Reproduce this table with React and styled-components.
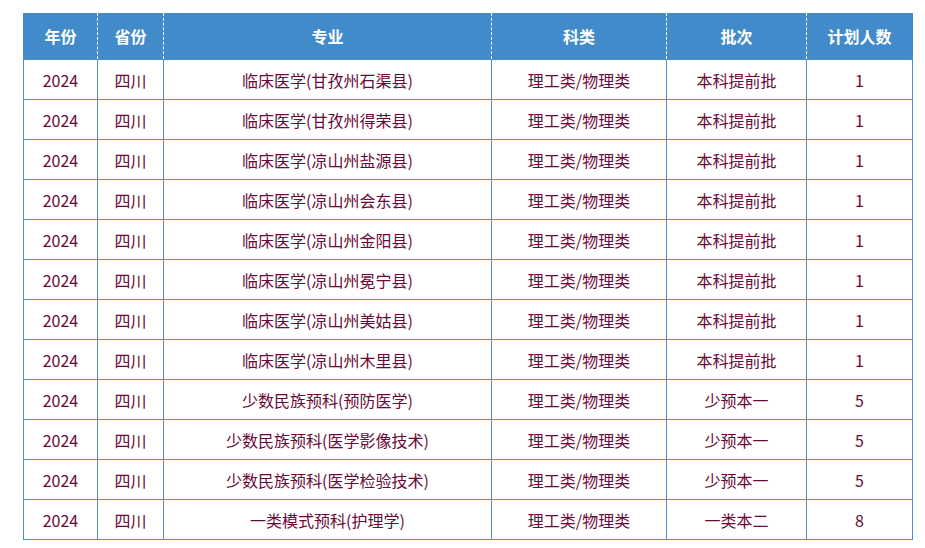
import React from 'react'
import styled, { createGlobalStyle } from 'styled-components'

const rows = [
  ['临床医学(甘孜州石渠县)', '本科提前批', 1],
  ['临床医学(甘孜州得荣县)', '本科提前批', 1],
  ['临床医学(凉山州盐源县)', '本科提前批', 1],
  ['临床医学(凉山州会东县)', '本科提前批', 1],
  ['临床医学(凉山州金阳县)', '本科提前批', 1],
  ['临床医学(凉山州冕宁县)', '本科提前批', 1],
  ['临床医学(凉山州美姑县)', '本科提前批', 1],
  ['临床医学(凉山州木里县)', '本科提前批', 1],
  ['少数民族预科(预防医学)', '少预本一', 5],
  ['少数民族预科(医学影像技术)', '少预本一', 5],
  ['少数民族预科(医学检验技术)', '少预本一', 5],
  ['一类模式预科(护理学)', '一类本二', 8],
]

const columns = [
  { title: '年份', width: 74 },
  { title: '省份', width: 66 },
  { title: '专业', width: 328 },
  { title: '科类', width: 175 },
  { title: '批次', width: 140 },
  { title: '计划人数', width: 106 },
]

const Global = createGlobalStyle`
  body {
    margin: 0;
    background: #fff;
    font-family: "Noto Sans CJK SC", "Noto Sans", sans-serif;
  }
`

const Wrap = styled.div`
  padding: 13px 0 0 23px;
`

const Table = styled.table`
  border-collapse: collapse;
  table-layout: fixed;
  width: 890px;
`

const Th = styled.th`
  height: 46px;
  padding: 0;
  background: #428bca;
  color: #fff;
  font-size: 16px;
  font-weight: bold;
  text-align: center;
  border-left: 1px dashed #fff;
  &:first-child {
    border-left: 1px solid #428bca;
  }
  &:last-child {
    border-right: 1px solid #428bca;
  }
`

const Td = styled.td`
  height: 39px;
  padding: 0;
  border: 1px solid #4a8fcd;
  color: #6a0937;
  font-size: 16px;
  text-align: center;
`

export default function App() {
  return (
    <Wrap>
      <Global />
      <Table>
        <colgroup>
          {columns.map((c) => (
            <col key={c.title} style={{ width: c.width }} />
          ))}
        </colgroup>
        <thead>
          <tr>
            {columns.map((c) => (
              <Th key={c.title}>{c.title}</Th>
            ))}
          </tr>
        </thead>
        <tbody>
          {rows.map(([major, batch, count]) => (
            <tr key={major}>
              <Td>2024</Td>
              <Td>四川</Td>
              <Td>{major}</Td>
              <Td>理工类/物理类</Td>
              <Td>{batch}</Td>
              <Td>{count}</Td>
            </tr>
          ))}
        </tbody>
      </Table>
    </Wrap>
  )
}
